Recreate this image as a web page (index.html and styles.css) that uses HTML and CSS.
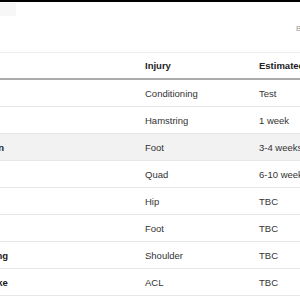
FILE: index.html
```html
<!DOCTYPE html>
<html lang="en">
<head>
<meta charset="utf-8">
<title>Injuries</title>
<link rel="stylesheet" href="styles.css">
</head>
<body>
<div class="topbar"></div>
<header class="masthead">
  <div class="logo"></div>
  <div class="meta">By Sports Desk</div>
</header>
<div class="scroller">
  <table class="injuries">
    <colgroup>
      <col class="c-player">
      <col class="c-injury">
      <col class="c-return">
    </colgroup>
    <thead>
      <tr><th>Player</th><th>Injury</th><th>Estimated return</th></tr>
    </thead>
    <tbody>
      <tr><td class="name">Rodrigo</td><td>Conditioning</td><td>Test</td></tr>
      <tr><td class="name">Bamford</td><td>Hamstring</td><td>1 week</td></tr>
      <tr class="hl"><td class="name">Joe Rodon</td><td>Foot</td><td>3-4 weeks</td></tr>
      <tr><td class="name">Raphinha</td><td>Quad</td><td>6-10 weeks</td></tr>
      <tr><td class="name">Koch</td><td>Hip</td><td>TBC</td></tr>
      <tr><td class="name">Roca</td><td>Foot</td><td>TBC</td></tr>
      <tr><td class="name">Luke Ayling</td><td>Shoulder</td><td>TBC</td></tr>
      <tr><td class="name">Jack Clarke</td><td>ACL</td><td>TBC</td></tr>
      <tr><td class="name">Gray</td><td>Knee</td><td>TBC</td></tr>
    </tbody>
  </table>
</div>
</body>
</html>
```
FILE: styles.css
```css
html, body {
  margin: 0;
  padding: 0;
  background: #fff;
  overflow: hidden;
}
body {
  font-family: "Liberation Sans", Arial, sans-serif;
  color: #222;
  width: 300px;
  height: 300px;
}
.topbar {
  height: 2px;
  background: #000;
}
.masthead {
  display: flex;
  align-items: flex-start;
  height: 50px;
  border-bottom: 1px solid #ececec;
  overflow: hidden;
}
.logo {
  flex: none;
  width: 16px;
  height: 13px;
  margin-top: 1px;
  background: #f7f7f7;
}
.meta {
  flex: none;
  margin-left: 280px;
  margin-top: 22px;
  font-size: 8px;
  color: #999;
  white-space: nowrap;
}
.scroller {
  overflow: hidden;
  width: 300px;
}
.injuries {
  margin-left: -55px;
  border-collapse: collapse;
  table-layout: fixed;
  width: 434px;
  font-size: 9.5px;
}
.c-player { width: 190px; }
.c-injury { width: 114px; }
.c-return { width: 130px; }
.injuries th,
.injuries td {
  padding: 0 10px;
  text-align: left;
  white-space: nowrap;
  overflow: hidden;
}
.injuries th {
  height: 25px;
  font-weight: bold;
  color: #222;
  border-bottom: 2px solid #ababab;
}
.injuries td {
  height: 26px;
  color: #333;
  border-bottom: 1px solid #e6e6e6;
}
.injuries td.name {
  font-weight: bold;
  color: #1a1a1a;
}
.injuries tr.hl td {
  background: #f2f2f2;
}
```
